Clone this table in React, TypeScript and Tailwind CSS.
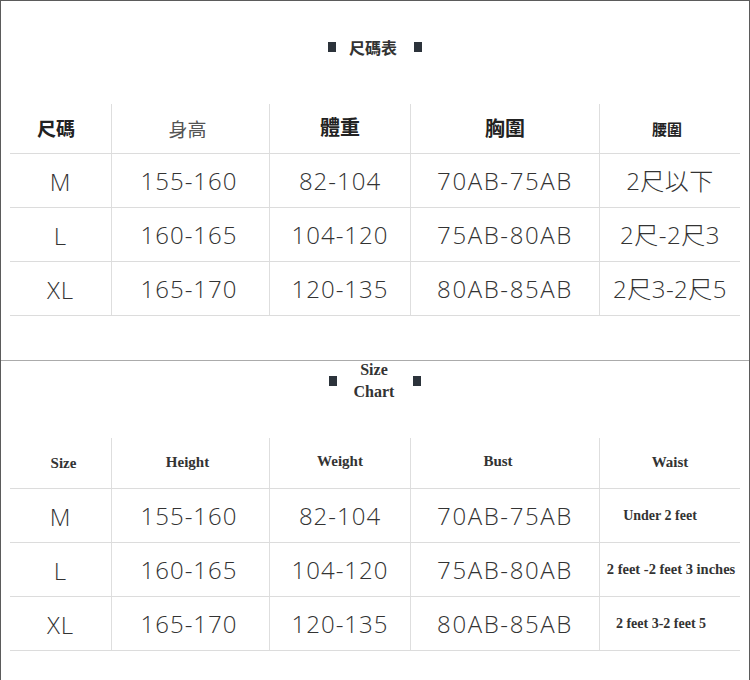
import React from "react";

type Row = {
  size: string;
  height: string;
  weight: string;
  bust: string;
  waistZh: string;
  waistEn: string;
  enClass: string;
};

const rows: Row[] = [
  { size: "M", height: "155-160", weight: "82-104", bust: "70AB-75AB", waistZh: "2尺以下", waistEn: "Under 2 feet", enClass: "text-[14px] pr-[20px]" },
  { size: "L", height: "160-165", weight: "104-120", bust: "75AB-80AB", waistZh: "2尺-2尺3", waistEn: "2 feet -2 feet 3 inches", enClass: "text-[14.5px] pl-[2px]" },
  { size: "XL", height: "165-170", weight: "120-135", bust: "80AB-85AB", waistZh: "2尺3-2尺5", waistEn: "2 feet 3-2 feet 5", enClass: "text-[14px] pr-[18px]" },
];

const gridCols = "grid grid-cols-[101px_158px_141px_189px_141px]";
const cell = "flex items-center justify-center";
const cellLine = "flex items-center justify-center border-l border-[#dedede]";
const num = "text-[24px] font-light text-[#333]";
const sansFont = "font-['Open_Sans','Noto_Sans_CJK_TC',sans-serif]";
const serifFont = "font-['Liberation_Serif','Times_New_Roman',serif]";

const Square = () => <span className="block w-[8px] h-[10px] bg-[#2c333b]" />;

const DataRows = ({ english }: { english: boolean }) => (
  <>
    {rows.map((r) => (
      <div key={r.size} className={`${gridCols} h-[54px] border-b border-[#dcdcdc] ${sansFont}`}>
        <div className={`${cell} ${num} tracking-[1px] pt-[2px]`}>{r.size}</div>
        <div className={`${cellLine} ${num} tracking-[1px] pr-[3px]`}>{r.height}</div>
        <div className={`${cellLine} ${num} tracking-[1px]`}>{r.weight}</div>
        <div className={`${cellLine} ${num} tracking-[1.6px]`}>{r.bust}</div>
        {english ? (
          <div className={`${cellLine} ${serifFont} font-bold text-[#333] whitespace-nowrap ${r.enClass}`}>
            {r.waistEn}
          </div>
        ) : (
          <div className={`${cellLine} ${num} tracking-[0.5px]`}>{r.waistZh}</div>
        )}
      </div>
    ))}
  </>
);

export default function App() {
  return (
    <div className="w-[750px] h-[680px] bg-white border-x border-t border-[#5b5b5b] flex flex-col overflow-hidden">
      {/* chinese table */}
      <div className="h-[360px] border-b border-[#ababab] pt-[36px]">
        <div className="flex items-center justify-center gap-[13px] h-[20px]">
          <Square />
          <span className="font-['Noto_Sans_CJK_TC',sans-serif] text-[16px] font-bold text-[#333] leading-[20px] mr-[4px]">
            尺碼表
          </span>
          <Square />
        </div>
        <div className="ml-[9px] mt-[47px] w-[730px]">
          <div className={`${gridCols} h-[50px] border-b border-[#dcdcdc] font-['Noto_Sans_CJK_TC',sans-serif] text-[#222]`}>
            <div className={`${cell} text-[19px] font-bold pr-[9px]`}>尺碼</div>
            <div className={`${cellLine} text-[19px] text-[#555] pt-[2px] pr-[6px]`}>身高</div>
            <div className={`${cellLine} text-[20px] font-bold pb-[4px]`}>體重</div>
            <div className={`${cellLine} text-[20px] font-bold pb-[2px]`}>胸圍</div>
            <div className={`${cellLine} text-[15px] font-bold pt-[1px] pr-[6px]`}>腰圍</div>
          </div>
          <DataRows english={false} />
        </div>
      </div>

      {/* english table */}
      <div className="flex-1">
        <div className="flex items-center justify-center gap-[17px] mt-[-2px]">
          <Square />
          <div className={`${serifFont} flex flex-col items-center text-[16px] font-bold text-[#333] leading-[22px] mr-[2px]`}>
            <span>Size</span>
            <span>Chart</span>
          </div>
          <Square />
        </div>
        <div className="ml-[9px] mt-[35px] w-[730px]">
          <div className={`${gridCols} h-[51px] border-b border-[#dcdcdc] ${serifFont} text-[15px] font-bold text-[#333]`}>
            <div className={`${cell} pl-[6px]`}>Size</div>
            <div className={`${cellLine} pb-[2px] pr-[6px]`}>Height</div>
            <div className={`${cellLine} pb-[4px]`}>Weight</div>
            <div className={`${cellLine} pb-[4px] pr-[14px]`}>Bust</div>
            <div className={`${cellLine} pb-[2px]`}>Waist</div>
          </div>
          <DataRows english />
        </div>
      </div>
    </div>
  );
}
